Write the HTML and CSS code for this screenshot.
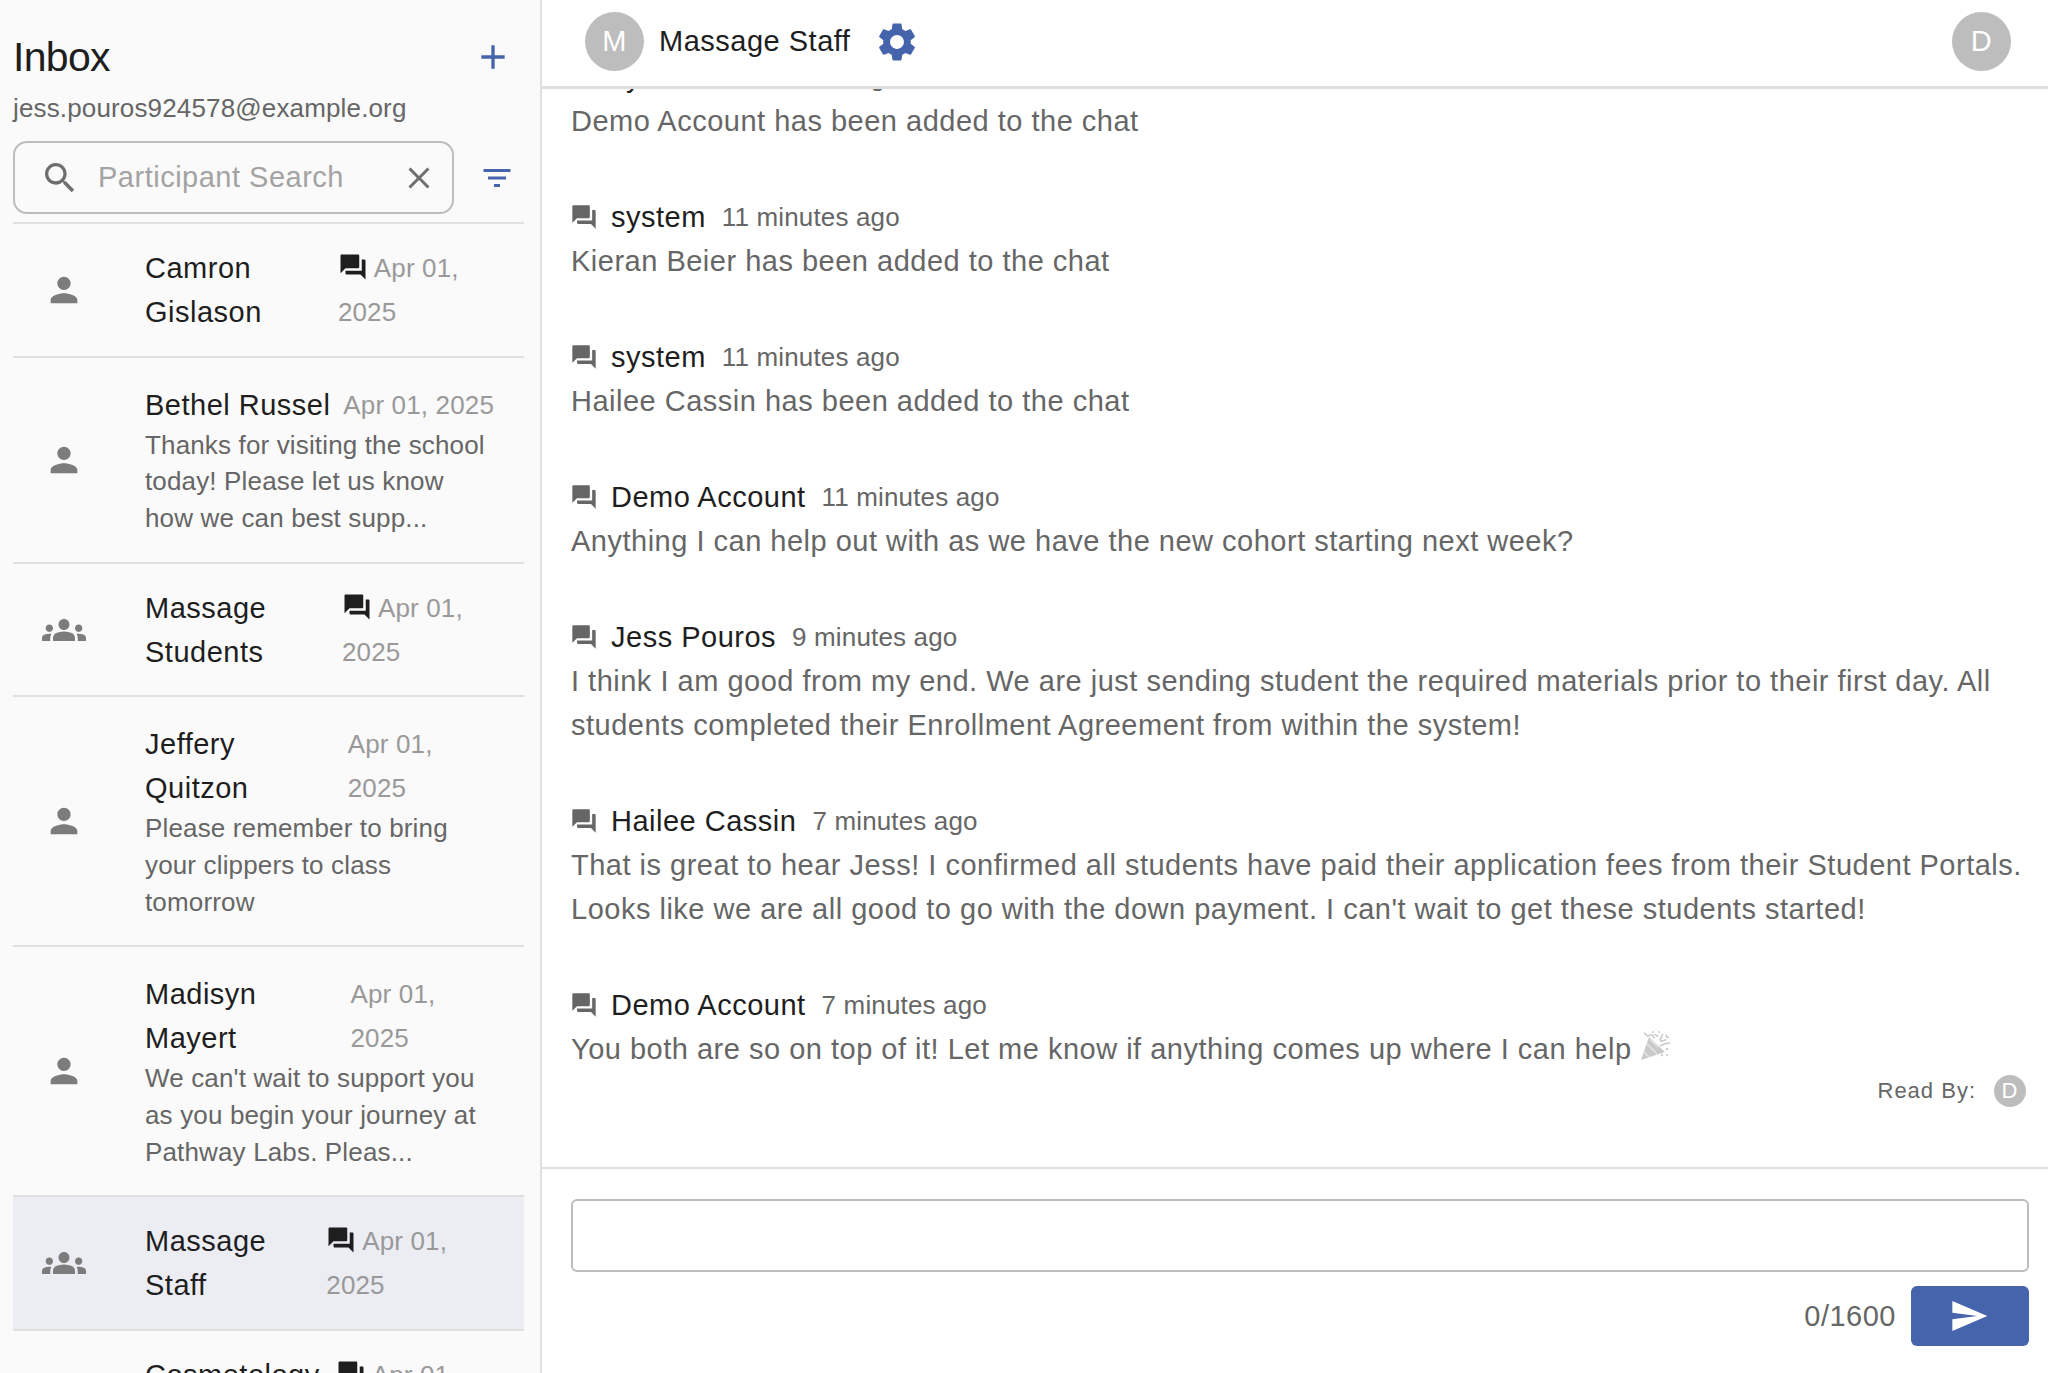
FILE: index.html
```html
<!DOCTYPE html>
<html lang="en">
<head>
  <meta charset="UTF-8">
  <meta name="viewport" content="width=device-width, initial-scale=1.0">
  <title>Inbox</title>
  <link rel="stylesheet" href="styles.css">
</head>
<body>
  <svg class="sprites" aria-hidden="true">
    <symbol id="i-forum" viewBox="0 0 24 24"><path d="M21 6h-2v9H6v2c0 .55.45 1 1 1h11l4 4V7c0-.55-.45-1-1-1zm-4 6V3c0-.55-.45-1-1-1H3c-.55 0-1 .45-1 1v14l4-4h10c.55 0 1-.45 1-1z"/></symbol>
    <symbol id="i-person" viewBox="0 0 24 24"><path d="M12 12c2.21 0 4-1.79 4-4s-1.79-4-4-4-4 1.79-4 4 1.79 4 4 4zm0 2c-2.67 0-8 1.34-8 4v2h16v-2c0-2.66-5.33-4-8-4z"/></symbol>
    <symbol id="i-groups" viewBox="0 0 24 24"><path d="M12 12.75c1.63 0 3.07.39 4.24.9 1.08.48 1.76 1.56 1.76 2.73V18H6v-1.61c0-1.18.68-2.26 1.76-2.73 1.17-.52 2.61-.91 4.24-.91zM4 13c1.1 0 2-.9 2-2s-.9-2-2-2-2 .9-2 2 .9 2 2 2zm1.13 1.1c-.37-.06-.74-.1-1.13-.1-.99 0-1.93.21-2.78.58C.48 14.9 0 15.62 0 16.43V18h4.5v-1.61c0-.83.23-1.61.63-2.29zM20 13c1.1 0 2-.9 2-2s-.9-2-2-2-2 .9-2 2 .9 2 2 2zm4 3.43c0-.81-.48-1.53-1.22-1.85-.85-.37-1.79-.58-2.78-.58-.39 0-.76.04-1.13.1.4.68.63 1.46.63 2.29V18H24v-1.57zM12 6c1.66 0 3 1.34 3 3s-1.34 3-3 3-3-1.34-3-3 1.34-3 3-3z"/></symbol>
  </svg>

  <div class="app">
    <aside class="sidebar">
      <div class="inbox-head">
        <h1>Inbox</h1>
        <svg class="icon add-icon" viewBox="0 0 24 24"><path d="M19 13h-6v6h-2v-6H5v-2h6V5h2v6h6v2z"/></svg>
      </div>
      <div class="email">jess.pouros924578@example.org</div>
      <div class="search-row">
        <label class="search">
          <svg class="icon search-icon" viewBox="0 0 24 24"><path d="M15.5 14h-.79l-.28-.27C15.41 12.59 16 11.11 16 9.5 16 5.91 13.09 3 9.5 3S3 5.91 3 9.5 5.91 16 9.5 16c1.61 0 3.09-.59 4.23-1.57l.27.28v.79l5 4.99L20.49 19l-4.99-5zm-6 0C7.01 14 5 11.99 5 9.5S7.01 5 9.5 5 14 7.01 14 9.5 11.99 14 9.5 14z"/></svg>
          <input type="text" placeholder="Participant Search">
          <svg class="icon clear-icon" viewBox="0 0 24 24"><path d="M19 6.41L17.59 5 12 10.59 6.41 5 5 6.41 10.59 12 5 17.59 6.41 19 12 13.41 17.59 19 19 17.59 13.41 12z"/></svg>
        </label>
        <svg class="icon filter-icon" viewBox="0 0 24 24"><path d="M10 18h4v-2h-4v2zM3 6v2h18V6H3zm3 7h12v-2H6v2z"/></svg>
      </div>

      <ul class="threads">
        <li class="thread">
          <svg class="icon thread-icon"><use href="#i-person"/></svg>
          <div class="thread-body">
            <div class="thread-top">
              <span class="thread-name">Camron Gislason</span>
              <span class="thread-date"><svg class="icon forum-icon"><use href="#i-forum"/></svg> Apr 01, 2025</span>
            </div>
          </div>
        </li>
        <li class="thread has-preview">
          <svg class="icon thread-icon"><use href="#i-person"/></svg>
          <div class="thread-body">
            <div class="thread-top">
              <span class="thread-name">Bethel Russel</span>
              <span class="thread-date">Apr 01, 2025</span>
            </div>
            <p class="thread-preview">Thanks for visiting the school today! Please let us know how we can best supp...</p>
          </div>
        </li>
        <li class="thread">
          <svg class="icon thread-icon group"><use href="#i-groups"/></svg>
          <div class="thread-body">
            <div class="thread-top">
              <span class="thread-name">Massage Students</span>
              <span class="thread-date"><svg class="icon forum-icon"><use href="#i-forum"/></svg> Apr 01, 2025</span>
            </div>
          </div>
        </li>
        <li class="thread has-preview">
          <svg class="icon thread-icon"><use href="#i-person"/></svg>
          <div class="thread-body">
            <div class="thread-top">
              <span class="thread-name">Jeffery Quitzon</span>
              <span class="thread-date">Apr 01, 2025</span>
            </div>
            <p class="thread-preview">Please remember to bring your clippers to class tomorrow</p>
          </div>
        </li>
        <li class="thread has-preview">
          <svg class="icon thread-icon"><use href="#i-person"/></svg>
          <div class="thread-body">
            <div class="thread-top">
              <span class="thread-name">Madisyn Mayert</span>
              <span class="thread-date">Apr 01, 2025</span>
            </div>
            <p class="thread-preview">We can't wait to support you as you begin your journey at Pathway Labs. Pleas...</p>
          </div>
        </li>
        <li class="thread selected">
          <svg class="icon thread-icon group"><use href="#i-groups"/></svg>
          <div class="thread-body">
            <div class="thread-top">
              <span class="thread-name">Massage Staff</span>
              <span class="thread-date"><svg class="icon forum-icon"><use href="#i-forum"/></svg> Apr 01, 2025</span>
            </div>
          </div>
        </li>
        <li class="thread">
          <svg class="icon thread-icon group"><use href="#i-groups"/></svg>
          <div class="thread-body">
            <div class="thread-top">
              <span class="thread-name">Cosmetology</span>
              <span class="thread-date"><svg class="icon forum-icon"><use href="#i-forum"/></svg> Apr 01, 2025</span>
            </div>
          </div>
        </li>
      </ul>
    </aside>

    <main class="chat">
      <header class="chat-head">
        <span class="avatar">M</span>
        <span class="chat-title">Massage Staff</span>
        <svg class="icon gear-icon" viewBox="0 0 24 24"><path d="M19.14 12.94c.04-.3.06-.61.06-.94 0-.32-.02-.64-.07-.94l2.03-1.58c.18-.14.23-.41.12-.61l-1.92-3.32c-.12-.22-.37-.29-.59-.22l-2.39.96c-.5-.38-1.03-.7-1.62-.94l-.36-2.54c-.04-.24-.24-.41-.48-.41h-3.84c-.24 0-.43.17-.47.41l-.36 2.54c-.59.24-1.13.57-1.62.94l-2.39-.96c-.22-.08-.47 0-.59.22L2.74 8.87c-.12.21-.08.47.12.61l2.03 1.58c-.05.3-.09.63-.09.94s.02.64.07.94l-2.03 1.58c-.18.14-.23.41-.12.61l1.92 3.32c.12.22.37.29.59.22l2.39-.96c.5.38 1.03.7 1.62.94l.36 2.54c.05.24.24.41.48.41h3.84c.24 0 .44-.17.47-.41l.36-2.54c.59-.24 1.13-.56 1.62-.94l2.39.96c.22.08.47 0 .59-.22l1.92-3.32c.12-.22.07-.47-.12-.61l-2.01-1.58zM12 15.6c-1.98 0-3.6-1.62-3.6-3.6s1.62-3.6 3.6-3.6 3.6 1.62 3.6 3.6-1.62 3.6-3.6 3.6z"/></svg>
        <span class="avatar me">D</span>
      </header>

      <section class="messages">
        <article class="message">
          <div class="message-head"><svg class="icon msg-icon"><use href="#i-forum"/></svg><span class="sender">system</span><span class="when">11 minutes ago</span></div>
          <p>Demo Account has been added to the chat</p>
        </article>
        <article class="message">
          <div class="message-head"><svg class="icon msg-icon"><use href="#i-forum"/></svg><span class="sender">system</span><span class="when">11 minutes ago</span></div>
          <p>Kieran Beier has been added to the chat</p>
        </article>
        <article class="message">
          <div class="message-head"><svg class="icon msg-icon"><use href="#i-forum"/></svg><span class="sender">system</span><span class="when">11 minutes ago</span></div>
          <p>Hailee Cassin has been added to the chat</p>
        </article>
        <article class="message">
          <div class="message-head"><svg class="icon msg-icon"><use href="#i-forum"/></svg><span class="sender">Demo Account</span><span class="when">11 minutes ago</span></div>
          <p>Anything I can help out with as we have the new cohort starting next week?</p>
        </article>
        <article class="message">
          <div class="message-head"><svg class="icon msg-icon"><use href="#i-forum"/></svg><span class="sender">Jess Pouros</span><span class="when">9 minutes ago</span></div>
          <p>I think I am good from my end. We are just sending student the required materials prior to their first day. All students completed their Enrollment Agreement from within the system!</p>
        </article>
        <article class="message">
          <div class="message-head"><svg class="icon msg-icon"><use href="#i-forum"/></svg><span class="sender">Hailee Cassin</span><span class="when">7 minutes ago</span></div>
          <p>That is great to hear Jess! I confirmed all students have paid their application fees from their Student Portals. Looks like we are all good to go with the down payment. I can't wait to get these students started!</p>
        </article>
        <article class="message last">
          <div class="message-head"><svg class="icon msg-icon"><use href="#i-forum"/></svg><span class="sender">Demo Account</span><span class="when">7 minutes ago</span></div>
          <p>You both are so on top of it! Let me know if anything comes up where I can help <svg class="popper" viewBox="0 0 32 32">
              <path d="M1 30 9 7l16 15z" fill="#c9c9c9"/>
              <path d="M4 22l5 5M7 14l10 10M10 9l8 8" stroke="#e4e4e4" stroke-width="1.6"/>
              <path d="M4 3c2 0 2 3 4 3s2-2 4-1 1 3 3 3M15 4c0 2 3 1 3 3M23 4c-2 1 0 3-2 4s-1 3 1 3c2 .5 3-2 4-1M27 5c-2 1 0 3 2 2M20 16c3-2 6-3 10-3" stroke="#c6c6c6" stroke-width="1.4" fill="none"/>
              <g fill="#cdcdcd"><circle cx="27" cy="19" r="1.2"/><circle cx="22" cy="25" r="1.2"/><circle cx="27" cy="25" r="1.1"/><circle cx="13" cy="2" r="1"/><circle cx="19" cy="2" r="1"/></g>
            </svg></p>
          <div class="read-by"><span>Read By:</span><span class="avatar small">D</span></div>
        </article>
      </section>

      <footer class="composer">
        <textarea class="composer-input"></textarea>
        <div class="composer-actions">
          <span class="counter">0/1600</span>
          <button class="send-btn" type="button"><svg class="icon send-icon" viewBox="0 0 24 24"><path d="M2.01 21L23 12 2.01 3 2 10l15 2-15 2z"/></svg></button>
        </div>
      </footer>
    </main>
  </div>
</body>
</html>
```

FILE: styles.css
```css
* {
  box-sizing: border-box;
}
html, body {
  height: 100%;
  margin: 0;
  overflow: hidden;
}
body {
  font-family: "Liberation Sans", Arial, sans-serif;
  font-size: 29px;
  letter-spacing: 0.5px;
  color: #666;
  background-color: #fff;
}
.sprites {
  display: none;
}
.icon {
  display: block;
  flex: none;
  fill: currentColor;
}
.app {
  display: flex;
  height: 100%;
}

/* sidebar */
.sidebar {
  flex: none;
  width: 542px;
  height: 100%;
  padding: 0 16px 0 13px;
  overflow: hidden;
  background-color: #fafafa;
  border-right: 2px solid #e0e0e0;
}
.inbox-head {
  display: flex;
  justify-content: space-between;
  align-items: center;
  height: 50px;
  margin-top: 32px;
}
h1 {
  margin: 0;
  font-size: 41px;
  font-weight: 400;
  letter-spacing: -0.7px;
  color: #1e1e1e;
}
.add-icon {
  width: 40px;
  height: 40px;
  margin-right: 11px;
  color: #4664ac;
}
.email {
  height: 44px;
  margin-top: 4px;
  line-height: 44px;
  font-size: 26px;
  letter-spacing: 0.15px;
}
.search-row {
  display: flex;
  align-items: center;
  margin-top: 11px;
  padding-bottom: 8px;
  border-bottom: 2px solid #e0e0e0;
}
.search {
  display: flex;
  align-items: center;
  width: 441px;
  height: 73px;
  padding: 0 15px 0 25px;
  border: 2px solid #bdbdbd;
  border-radius: 14px;
}
.search input {
  flex: 1;
  min-width: 0;
  margin-left: 18px;
  padding: 0;
  border: 0;
  outline: 0;
  background: none;
  font: inherit;
  letter-spacing: inherit;
}
.search input::placeholder {
  color: #a3a3a3;
  opacity: 1;
}
.search-icon {
  width: 40px;
  height: 40px;
  color: #6e6e6e;
}
.clear-icon {
  width: 36px;
  height: 36px;
  color: #6e6e6e;
}
.filter-icon {
  width: 36px;
  height: 36px;
  margin-left: 25px;
  color: #4664ac;
}
.threads {
  margin: 0;
  padding: 0;
  list-style: none;
}
.thread {
  display: flex;
  align-items: center;
  padding: 22px 27px 21.5px 0;
  border-bottom: 2px solid #e0e0e0;
}
.thread.has-preview {
  padding: 25px 30px 25px 0;
}
.thread.selected {
  background-color: #ecedf3;
}
.thread-icon {
  width: 40px;
  height: 40px;
  margin: 0 61px 0 31px;
  color: #7c7c7c;
}
.thread-icon.group {
  width: 44px;
  height: 44px;
  margin: 0 59px 0 29px;
}
.thread-body {
  flex: 1;
  min-width: 0;
}
.thread-top {
  display: flex;
  justify-content: space-between;
  gap: 16px;
  line-height: 44px;
}
.has-preview .thread-top {
  gap: 10px;
}
.thread-name {
  flex-shrink: 1.6;
  color: #1e1e1e;
}
.thread-date {
  flex-shrink: 1;
  font-size: 26px;
  letter-spacing: 0.15px;
  color: #999;
}
.thread-date .forum-icon {
  display: inline-block;
  width: 30px;
  height: 30px;
  vertical-align: -5px;
  color: #1e1e1e;
}
.thread-preview {
  margin: 0;
  font-size: 26px;
  letter-spacing: 0.15px;
  line-height: 36.7px;
}

/* chat */
.chat {
  display: flex;
  flex: 1;
  flex-direction: column;
  min-width: 0;
}
.chat-head {
  display: flex;
  flex: none;
  align-items: center;
  height: 89px;
  padding: 0 37px 3px 43px;
  border-bottom: 3px solid #e0e0e0;
}
.avatar {
  display: flex;
  flex: none;
  justify-content: center;
  align-items: center;
  width: 59px;
  height: 59px;
  border-radius: 50%;
  background-color: #bdbdbd;
  color: #fff;
}
.avatar.me {
  margin-left: auto;
}
.avatar.small {
  width: 32px;
  height: 32px;
  font-size: 22px;
}
.chat-title {
  margin-left: 15px;
  color: #1e1e1e;
}
.gear-icon {
  width: 46px;
  height: 46px;
  margin-left: 24px;
  color: #4664ac;
}
.messages {
  display: flex;
  flex: 1;
  flex-direction: column;
  justify-content: flex-end;
  min-height: 0;
  overflow: hidden;
  padding: 0 22px 0 29px;
}
.message {
  padding-bottom: 52px;
}
.message.last {
  padding-bottom: 60px;
}
.message p {
  margin: 0;
  line-height: 44px;
}
.message-head {
  display: flex;
  align-items: center;
  height: 44px;
}
.msg-icon {
  width: 28px;
  height: 28px;
  margin-left: -1px;
  color: #666;
}
.sender {
  margin-left: 13px;
  color: #1e1e1e;
}
.when {
  margin-left: 16px;
  font-size: 26px;
  letter-spacing: 0.15px;
}
.popper {
  width: 32px;
  height: 32px;
  vertical-align: -3px;
}
.read-by {
  display: flex;
  justify-content: flex-end;
  align-items: center;
  gap: 18px;
  margin-top: 4px;
  font-size: 22px;
  letter-spacing: 1px;
}
.composer {
  flex: none;
  padding: 30px 19px 27px 29px;
  border-top: 2px solid #e0e0e0;
}
.composer-input {
  display: block;
  width: 100%;
  height: 73px;
  border: 2px solid #bdbdbd;
  border-radius: 6px;
  outline: 0;
  resize: none;
}
.composer-actions {
  display: flex;
  justify-content: flex-end;
  align-items: center;
  gap: 15px;
  margin-top: 14px;
}
.send-btn {
  display: flex;
  justify-content: center;
  align-items: center;
  width: 118px;
  height: 60px;
  padding: 0;
  border: none;
  border-radius: 6px;
  background-color: #4664ac;
  color: #fff;
}
.send-icon {
  width: 40px;
  height: 40px;
  margin-left: -2px;
}
```
